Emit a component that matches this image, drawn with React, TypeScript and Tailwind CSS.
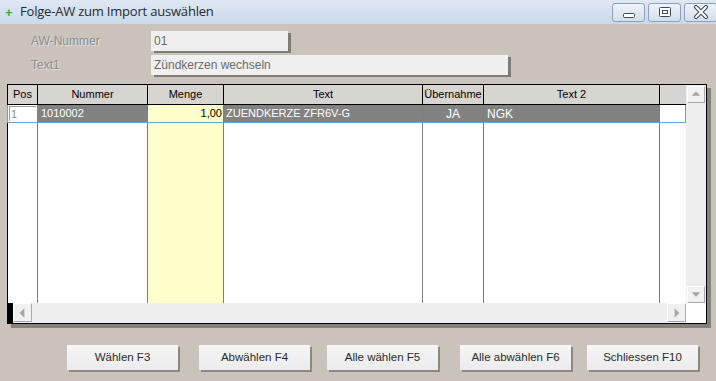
import React from "react";

const cols = [
  { key: "pos", label: "Pos", w: "w-[30px]" },
  { key: "nummer", label: "Nummer", w: "w-[110px]" },
  { key: "menge", label: "Menge", w: "w-[76px]" },
  { key: "text", label: "Text", w: "w-[199px]" },
  { key: "uebernahme", label: "Übernahme", w: "w-[61px]" },
  { key: "text2", label: "Text 2", w: "w-[176px]" },
  { key: "blank", label: "", w: "w-[26px]" },
];

function WinButton({ kind }: { kind: "min" | "max" | "close" }) {
  return (
    <div className="w-[33px] h-[19px] rounded-[3px] border border-[#8e9fb8] bg-gradient-to-b from-[#eef3f9] to-[#d3deec] flex items-center justify-center">
      {kind === "min" && (
        <svg width="14" height="14" viewBox="0 0 14 14">
          <rect x="1.5" y="8.5" width="11" height="4" rx="1" fill="#fff" stroke="#3c4a5e" />
        </svg>
      )}
      {kind === "max" && (
        <svg width="14" height="14" viewBox="0 0 14 14">
          <rect x="1.5" y="2.5" width="11" height="9" rx="1" fill="#fff" stroke="#3c4a5e" />
          <rect x="4.5" y="5.5" width="5" height="3" fill="#fff" stroke="#3c4a5e" />
        </svg>
      )}
      {kind === "close" && (
        <svg width="16" height="14" viewBox="0 0 16 14">
          <path d="M3 2 L13 12 M13 2 L3 12" stroke="#3c4a5e" strokeWidth="4" strokeLinecap="round" />
          <path d="M3 2 L13 12 M13 2 L3 12" stroke="#fff" strokeWidth="2" strokeLinecap="round" />
        </svg>
      )}
    </div>
  );
}

function ScrollBtn({ dir }: { dir: "up" | "down" }) {
  const tri = dir === "up" ? "M4 10 L9 5 L14 10 Z" : "M4 6 L9 11 L14 6 Z";
  return (
    <div className="w-[18px] h-[17px] bg-[#f0f0f0] border border-t-white border-l-white border-r-[#a8a8a8] border-b-[#a8a8a8] flex items-center justify-center">
      <svg width="18" height="17" viewBox="0 0 18 17">
        <path d={tri} fill="#a6a6a6" />
      </svg>
    </div>
  );
}

function ScrollBtnH({ dir }: { dir: "left" | "right" }) {
  return (
    <div className="h-[20px] flex items-start bg-[#eeeeee]">
      <div className="w-[19px] h-[19px] bg-[#f0f0f0] border border-t-white border-l-white border-r-[#a8a8a8] border-b-[#a8a8a8] flex items-center justify-center">
        <svg width="18" height="18" viewBox="0 0 18 18">
          <path d={dir === "left" ? "M11 4 L6 9 L11 14 Z" : "M7 4 L12 9 L7 14 Z"} fill="#a6a6a6" />
        </svg>
      </div>
    </div>
  );
}

function Button({ label, ml }: { label: string; ml: string }) {
  return (
    <div
      className={`${ml} w-[111px] h-[25px] bg-gradient-to-b from-[#f6f6f6] to-[#ebebeb] shadow-[2px_2px_0_#8c877f] flex items-center justify-center text-[11.5px] text-[#2a2a2a]`}
    >
      {label}
    </div>
  );
}

export default function App() {
  return (
    <div className="w-[716px] h-[381px] bg-[#c9c3bb] flex flex-col overflow-hidden font-['Liberation_Sans',Arial,sans-serif]">
      {/* title bar */}
      <div className="h-[24px] bg-gradient-to-b from-[#dfe8f3] to-[#cbd9ea] flex items-center">
        <span className="ml-[5px] w-[8px] text-[#2fb13a] font-bold text-[13px] leading-none">+</span>
        <span className="ml-[7px] text-[13px] text-[#1f2a36] font-['Open_Sans',sans-serif] tracking-[-0.2px]">
          Folge-AW zum Import auswählen
        </span>
        <div className="ml-auto flex gap-[3px] mr-[-1px]">
          <WinButton kind="min" />
          <WinButton kind="max" />
          <WinButton kind="close" />
        </div>
      </div>

      {/* form */}
      <div className="pt-[7px] flex flex-col gap-[4px]">
        <div className="flex items-center">
          <span className="w-[151px] pl-[31px] text-[12px] text-[#8d8d8d] [text-shadow:1px_1px_0_#e4e0da]">
            AW-Nummer
          </span>
          <div className="w-[137px] h-[20px] bg-[#f0f0f0] shadow-[3px_2px_0_#7f7b75] flex items-center px-[3px] text-[12px] text-[#6a6a6a]">
            01
          </div>
        </div>
        <div className="flex items-center">
          <span className="w-[151px] pl-[31px] text-[12px] text-[#8d8d8d] [text-shadow:1px_1px_0_#e4e0da]">
            Text1
          </span>
          <div className="w-[357px] h-[20px] bg-[#f0f0f0] shadow-[3px_2px_0_#7f7b75] flex items-center px-[3px] text-[12px] text-[#6a6a6a]">
            Zündkerzen wechseln
          </div>
        </div>
      </div>

      {/* table */}
      <div className="ml-[7px] mt-[9px] w-[700px] h-[240px] border border-black bg-white shadow-[4px_4px_0_#86817a] flex flex-col">
        <div className="flex h-[218px]">
          <div className="w-[678px] flex flex-col">
            <div className="flex h-[20px] bg-[#d8d5d0] border-b border-black">
              {cols.map((c, i) => (
                <div
                  key={c.key}
                  className={`${c.w} ${i < cols.length - 1 ? "border-r border-black" : ""} flex items-center justify-center text-[11px] text-black`}
                >
                  {c.label}
                </div>
              ))}
            </div>
            {/* selected row */}
            <div className="flex h-[18px] border-b border-r border-l border-[#6e9fd6] -ml-px w-[679px] text-[11px]">
              <div className="w-[30px] border-r border-[#7d7d7d] bg-white flex items-center">
                <div className="ml-px w-[27px] h-[15px] border-t border-l border-[#9a9a9a] flex items-center pl-px text-[#8a8a8a]">
                  1
                </div>
              </div>
              <div className="w-[110px] border-r border-[#7d7d7d] bg-[#828282] text-white flex items-center pl-[3px]">
                1010002
              </div>
              <div className="w-[76px] border-r border-[#7d7d7d] bg-[#ffffcc] text-black flex items-center justify-end pr-px">
                1,00
              </div>
              <div className="w-[199px] border-r border-[#7d7d7d] bg-[#828282] text-white flex items-center pl-[2px]">
                ZUENDKERZE ZFR6V-G
              </div>
              <div className="w-[61px] border-r border-[#7d7d7d] bg-[#828282] text-white flex items-center justify-center text-[12px]">
                JA
              </div>
              <div className="w-[176px] border-r border-[#7d7d7d] bg-[#828282] text-white flex items-center pl-[3px] text-[12px]">
                NGK
              </div>
              <div className="w-[25px] bg-white" />
            </div>
            <div className="flex flex-1">
              {cols.map((c, i) => (
                <div
                  key={c.key}
                  className={`${c.w} ${i < cols.length - 1 ? "border-r border-[#7d7d7d]" : ""} ${c.key === "menge" ? "bg-[#ffffcc]" : "bg-white"}`}
                />
              ))}
            </div>
          </div>
          <div className="w-[20px] bg-[#eeeeee] flex flex-col justify-between items-center pt-px pr-px">
            <ScrollBtn dir="up" />
            <ScrollBtn dir="down" />
          </div>
        </div>
        <div className="flex h-[20px]">
          <div className="w-[5px] bg-black" />
          <ScrollBtnH dir="left" />
          <div className="flex-1 bg-[#eeeeee]" />
          <ScrollBtnH dir="right" />
          <div className="w-[20px] bg-white" />
        </div>
      </div>

      {/* buttons */}
      <div className="flex mt-[21px]">
        <Button label="Wählen F3" ml="ml-[67px]" />
        <Button label="Abwählen F4" ml="ml-[21px]" />
        <Button label="Alle wählen F5" ml="ml-[17px]" />
        <Button label="Alle abwählen F6" ml="ml-[22px]" />
        <Button label="Schliessen F10" ml="ml-[16px]" />
      </div>
    </div>
  );
}
